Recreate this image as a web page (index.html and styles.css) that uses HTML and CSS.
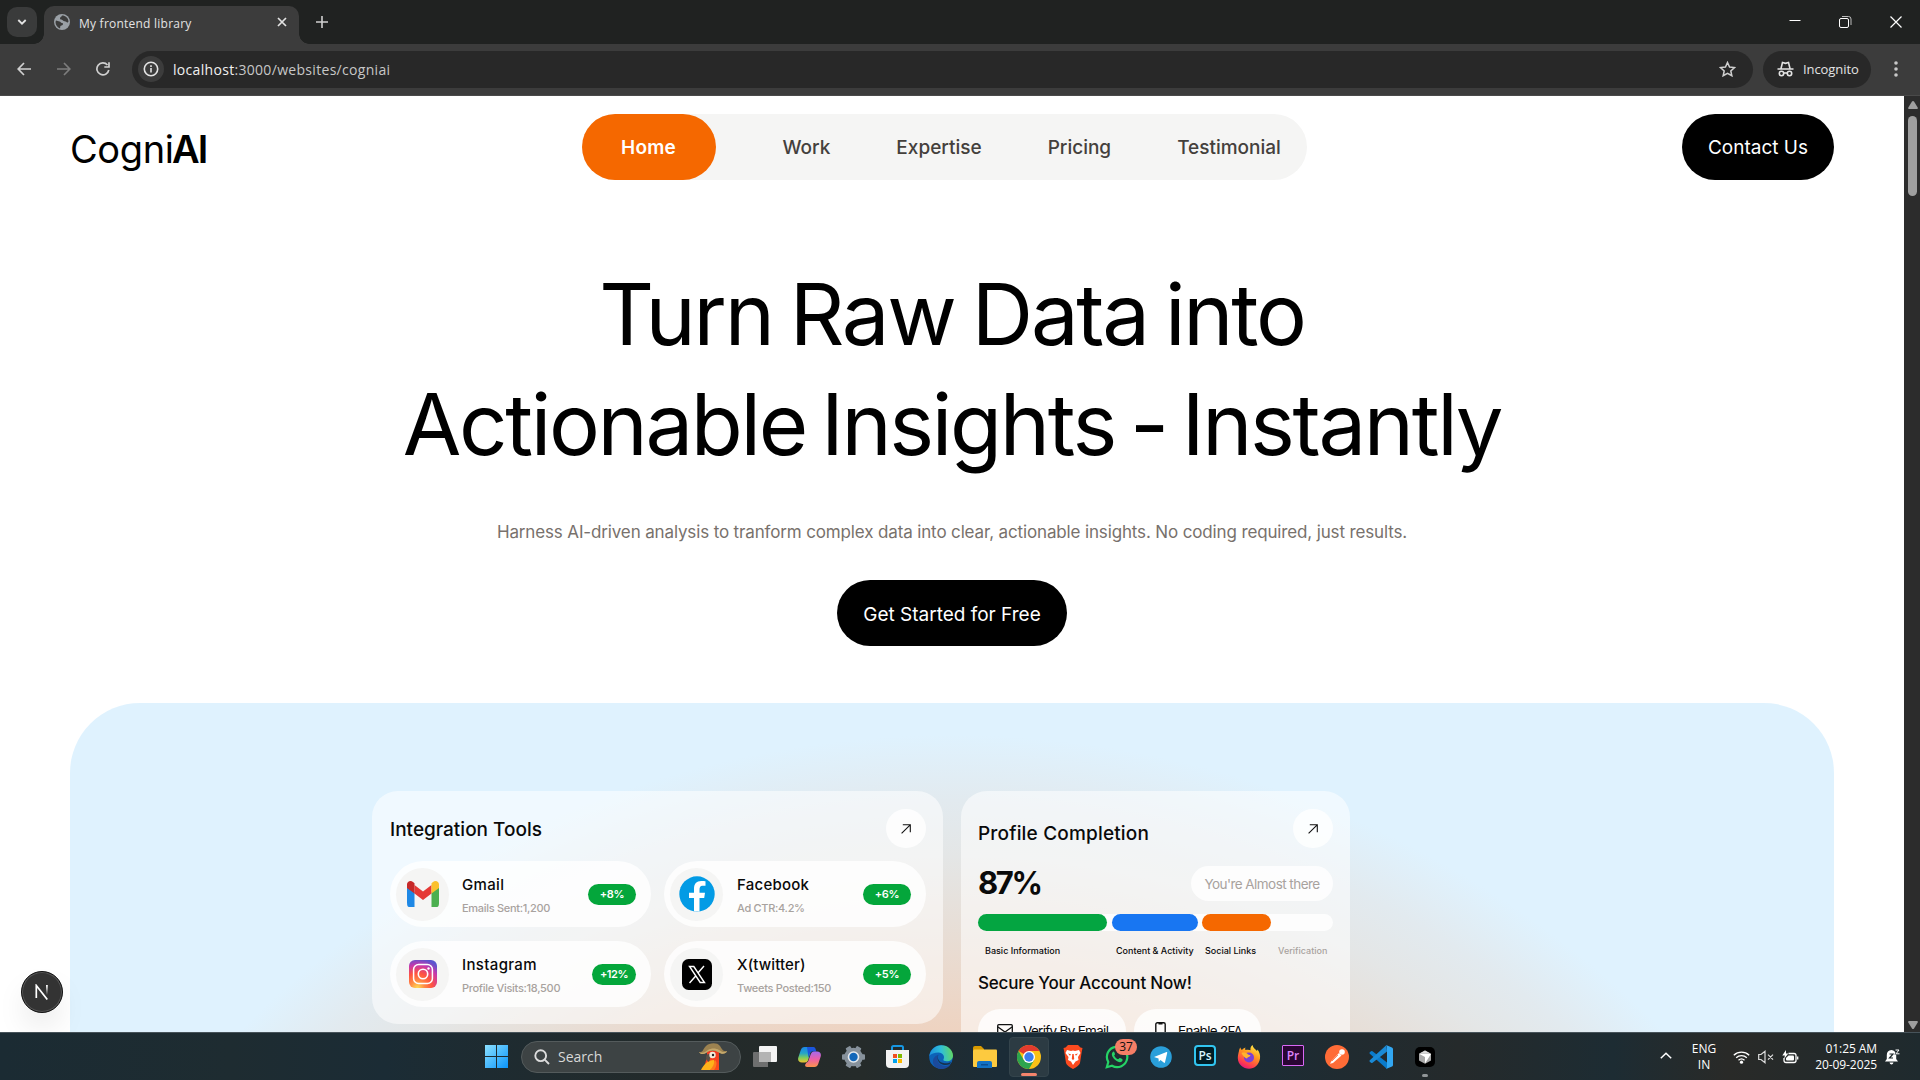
FILE: index.html
```html
<!DOCTYPE html>
<html lang="en">
<head>
<meta charset="utf-8">
<title>My frontend library</title>
<link rel="stylesheet" href="styles.css">
</head>
<body>
<div class="screen">
  <div class="tabs">
    <div class="tab-search"><svg width="10" height="8" viewBox="0 0 10 8" fill="none" stroke="#e3e3e3" stroke-width="1.8"><path d="M1.3 2 5 5.7 8.7 2"/></svg></div>
    <div class="tab">
      <svg width="16" height="16" viewBox="0 0 16 16"><circle cx="8" cy="8" r="8" fill="#9aa0a6"/><path d="M2 6.5c1.5.2 2.200 1 3.500 1s1 1.500 2.500 1.500 1.500 2-.5 2.500-1 2.500-1.500 3C3.500 13.500 1.500 11 1.500 8zM8 1.500c-.5 1.500-2 1.500-2 3s2.500 1 3 2 2.500.5 3.500 1.500 1.500.5 2-.5C14.300 4 11.500 1.500 8 1.500z" fill="#3c3c3c"/></svg>
      <span class="tab-title">My frontend library</span>
      <svg class="tab-close" width="10" height="10" viewBox="0 0 10 10" stroke="#e3e3e3" stroke-width="1.700"><path d="m1 1 8 8M9 1 1 9"/></svg>
    </div>
    <svg class="tab-new" width="12" height="12" viewBox="0 0 12 12" stroke="#d0d0d0" stroke-width="1.600"><path d="M6 0v12M0 6h12"/></svg>
    <div class="win">
      <svg width="12" height="12" viewBox="0 0 12 12" stroke="#fff"><path d="M.5 4.500h11"/></svg>
      <svg width="13" height="12" viewBox="0 0 13 12" fill="none" stroke="#fff"><rect x=".5" y="2.500" width="9" height="9" rx="1.500"/><path d="M3 .5h6.500a2.500 2.500 0 0 1 2.500 2.500V9" stroke="#bbb"/></svg>
      <svg width="12" height="12" viewBox="0 0 12 12" stroke="#fff" stroke-width="1.200"><path d="m.5.5 11 11M11.500.5l-11 11"/></svg>
    </div>
  </div>

  <div class="toolbar">
    <svg width="14" height="14" viewBox="0 0 14 14" fill="none" stroke="#d0d0d0" stroke-width="1.700"><path d="M14 7H1.500M7 1 1.200 7 7 13"/></svg>
    <svg width="14" height="14" viewBox="0 0 14 14" fill="none" stroke="#7d7d7d" stroke-width="1.700"><path d="M0 7h12.500M7 1l5.800 6L7 13"/></svg>
    <svg width="14" height="14" viewBox="0 0 14 14" fill="none" stroke="#d0d0d0" stroke-width="1.700"><path d="M12.800 8A6 6 0 1 1 11.500 3M13 .3V5H8.300"/></svg>
    <div class="address">
      <span class="info"><svg width="16" height="16" viewBox="0 0 16 16" fill="none" stroke="#e3e3e3" stroke-width="1.600"><circle cx="8" cy="8" r="6.700"/><path d="M8 7v4.500M8 4.300V6"/></svg></span>
      <span class="url"><b>localhost</b>:3000/websites/cogniai</span>
      <svg class="star" width="17" height="16" viewBox="0 0 17 16" fill="none" stroke="#d0d0d0" stroke-width="1.500"><path d="m8.500 1.500 2.050 4.550 4.950.5-3.700 3.350 1.050 4.850L8.500 12.300l-4.350 2.450L5.200 9.900 1.500 6.550l4.950-.5z"/></svg>
    </div>
    <div class="incognito">
      <svg width="17" height="16" viewBox="0 0 17 16" fill="none" stroke="#e3e3e3" stroke-width="1.600"><path d="M.5 8h16M4 7.500 5.500 1.500l3 .8 3-.8L13 7.500"/><circle cx="4.500" cy="12.500" r="2.200"/><circle cx="12.500" cy="12.500" r="2.200"/><path d="M6.700 12h3.600"/></svg>
      <span>Incognito</span>
    </div>
    <svg class="menu" width="4" height="16" viewBox="0 0 4 16" fill="#c8c8c8"><circle cx="2" cy="2" r="1.800"/><circle cx="2" cy="8" r="1.800"/><circle cx="2" cy="14" r="1.800"/></svg>
  </div>

  <div class="viewport">
    <main class="page">
      <header class="header">
        <div class="logo">Cogni<b>AI</b></div>
        <nav class="nav"><a class="active">Home</a><a>Work</a><a>Expertise</a><a>Pricing</a><a>Testimonial</a></nav>
        <a class="pill contact">Contact Us</a>
      </header>
      <section class="hero">
        <h1><span class="line-a">Turn Raw Data into</span><span class="line-b">Actionable Insights - Instantly</span></h1>
        <p>Harness AI-driven analysis to tranform complex data into clear, actionable insights. No coding required, just results.</p>
        <a class="pill cta">Get Started for Free</a>
      </section>
      <section class="panel">
        <article class="card tools">
          <div class="card-head"><h2>Integration Tools</h2><span class="go"><svg width="10" height="10" viewBox="0 0 10 10" fill="none" stroke="#111" stroke-width="1.100"><path d="M.6 9.400 9.200.8M1.800.7h7.500v7.500"/></svg></span></div>
          <div class="tool-grid">
            <div class="tool">
              <span class="tool-icon"><svg width="32" height="28" viewBox="0 -1 32 28"><path d="M0 6v15.500Q0 26 2 26h5.500V11z" fill="#1e88e5"/><path d="M32 6v15.500q0 4.500-2 4.500h-5.500V11z" fill="#4caf50"/><path d="m7.500 4 8.500 6.500L24.500 4v8.500L16 19l-8.500-6.500z" fill="#e53935"/><path d="M0 3.500C0 .5 3.500-1 6 1l1.500 1.200v10.300L0 7z" fill="#c62828"/><path d="M32 3.500C32 .5 28.500-1 26 1l-1.500 1.200v10.300L32 7z" fill="#fbc02d"/></svg></span>
              <div class="tool-text"><h3 class="sp3">Gmail</h3><p>Emails Sent:1,200</p></div><span class="badge">+8%</span>
            </div>
            <div class="tool">
              <span class="tool-icon"><svg width="36" height="36" viewBox="0 0 36 36"><circle cx="18" cy="18" r="17.700" fill="#039be5"/><path d="M20.500 35.500V22h4.700l.8-5.200h-5.500v-2.900c0-2.200.7-4.100 2.800-4.100h3.200V5.300c-.6-.1-1.900-.3-4.200-.3-4.900 0-7.300 2.700-7.300 8v3.800H10V22h5v13.300q2.500.5 5.500.2z" fill="#fff"/></svg></span>
              <div class="tool-text"><h3 class="sp2">Facebook</h3><p>Ad CTR:4.2%</p></div><span class="badge">+6%</span>
            </div>
            <div class="tool">
              <span class="tool-icon"><svg width="28" height="28" viewBox="0 0 28 28"><defs><radialGradient id="ig" cx=".3" cy="1" r="1.050"><stop offset="0" stop-color="#fd5"/><stop offset=".25" stop-color="#ff8a45"/><stop offset=".5" stop-color="#ff543f"/><stop offset=".78" stop-color="#c837ab"/><stop offset="1" stop-color="#5b54cf"/></radialGradient></defs><rect width="28" height="28" rx="6" fill="url(#ig)"/><rect x="4.600" y="4.600" width="18.800" height="18.800" rx="5" fill="none" stroke="#fff" stroke-width="1.500"/><circle cx="14" cy="14" r="4.700" fill="none" stroke="#fff" stroke-width="1.600"/><circle cx="19.500" cy="8.500" r="1.200" fill="#fff"/></svg></span>
              <div class="tool-text up"><h3 class="sp3">Instagram</h3><p>Profile Visits:18,500</p></div><span class="badge wide">+12%</span>
            </div>
            <div class="tool">
              <span class="tool-icon"><svg width="30" height="31" viewBox="0 0 30 31"><rect width="30" height="31" rx="6.500"/><path d="M7.500 7.500h4.300l10.700 16h-4.300zM22 7l-6.300 7.200M13.500 17.200 7.500 24" fill="none" stroke="#fff" stroke-width="1.400"/></svg></span>
              <div class="tool-text up"><h3 class="sp1">X(twitter)</h3><p>Tweets Posted:150</p></div><span class="badge">+5%</span>
            </div>
          </div>
        </article>
        <article class="card profile">
          <div class="card-head"><h2>Profile Completion</h2><span class="go"><svg width="10" height="10" viewBox="0 0 10 10" fill="none" stroke="#111" stroke-width="1.100"><path d="M.6 9.400 9.200.8M1.800.7h7.500v7.500"/></svg></span></div>
          <div class="score"><strong>87%</strong><span>You're Almost there</span></div>
          <div class="meter"><i class="m-green"></i><i class="m-blue"></i><i class="m-orange"></i></div>
          <div class="legend"><span>Basic Information</span><span>Content &amp; Activity</span><span>Social Links</span><span class="dim">Verification</span></div>
          <h4>Secure Your Account Now!</h4>
          <div class="actions">
            <a class="verify"><svg width="16" height="14" viewBox="0 0 16 14" fill="none" stroke="#111" stroke-width="1.300"><rect x=".7" y=".7" width="14.600" height="12" rx="1"/><path d="m1 3 7 5 7-5"/></svg>Verify By Email</a>
            <a class="twofa"><svg width="11" height="18" viewBox="0 0 11 18" fill="none" stroke="#111" stroke-width="1.400"><rect x=".8" y=".8" width="9.400" height="16.400" rx="1.500"/><path d="M3.500 1.500h4" stroke-width="2"/></svg>Enable 2FA</a>
          </div>
        </article>
      </section>
    </main>
    <div class="scrollbar">
      <svg width="10" height="8" viewBox="0 0 10 8" fill="#9f9f9f"><path d="M5 0q.6 0 1 .6L9.700 6.500Q10.200 8 9 8H1Q-.2 8 .3 6.500L4 .6Q4.400 0 5 0z"/></svg>
      <div class="thumb"></div>
      <svg class="down" width="10" height="8" viewBox="0 0 10 8" fill="#9f9f9f"><path d="M5 8q.6 0 1-.6l3.700-5.900Q10.200 0 9 0H1Q-.2 0 .3 1.500L4 7.400Q4.400 8 5 8z"/></svg>
    </div>
    <div class="dev-badge"><svg width="14" height="16" viewBox="0 0 14 16" fill="none"><defs><linearGradient id="nf" x1="0" y1="0" x2="0" y2="1"><stop stop-color="#fff"/><stop offset="1" stop-color="#fff" stop-opacity="0"/></linearGradient></defs><path d="M1.300 14V1.500L12.300 15.500" stroke="#fff" stroke-width="1.700"/><rect x="11" y="1" width="1.800" height="10" fill="url(#nf)"/></svg></div>
  </div>

  <footer class="taskbar">
    <svg class="start" width="23" height="23" viewBox="0 0 23 23"><defs><linearGradient id="wn" x1="0" y1="0" x2="1" y2="1"><stop stop-color="#8be0ff"/><stop offset="1" stop-color="#0a94fb"/></linearGradient></defs><path d="M0 0h11v11H0zM12 0h11v11H12zM0 12h11v11H0zM12 12h11v11H12z" fill="url(#wn)"/></svg>
    <div class="search">
      <svg width="16" height="16" viewBox="0 0 16 16" fill="none" stroke="#dcdcdc" stroke-width="1.900"><circle cx="6.700" cy="6.700" r="5.400"/><path d="m10.700 10.700 4.300 4.300"/></svg>
      <span>Search</span>
      <svg class="parrot" width="28" height="27" viewBox="0 0 28 27"><defs><linearGradient id="pr" x1="0" y1="0" x2="0" y2="1"><stop stop-color="#ef3b24"/><stop offset="1" stop-color="#ff4a1c"/></linearGradient></defs><path d="M8 8h12v19H7c-2-6 0-9 1-12z" fill="url(#pr)"/><path d="M2 27c3-6 7-10 13-10 2 4-1 9-4 10z" fill="#ffb21a"/><path d="M16 17c3 2 1 8-1 10h-4c3-3 4-6 5-10z" fill="#ff7a1c"/><path d="M10 11c-4 0-4 6 0 8 1-2 1-5 2-7z" fill="#5a5146"/><circle cx="13.500" cy="12" r="3.200" fill="#f3ecdc"/><circle cx="14" cy="12" r="1.200" fill="#222"/><path d="M0 9c4 1 4-3 7-6s11-4 14 0c2 3 3 6 7 5-1 3-5 4-9 1-4-2-8-2-12 1-3 2-6 1-7-1z" fill="#9c8250"/><path d="M0 9c4 2 6 0 9-2s8-2 11 0 5 3 8 1c-1 3-5 4-9 1-4-2-8-2-12 1-3 2-6 1-7-1z" fill="#c5a96c"/></svg>
    </div>
    <div class="apps">
      <span><svg width="24" height="22" viewBox="0 0 24 22"><rect x="6" width="18" height="16" rx="1" fill="#f4f4f4"/><path d="M1 6h17v10h-3v5H1q-1 0-1-1V7q0-1 1-1z" fill="#7b7b7b" fill-opacity=".85"/><path d="M6 6h12v10H6z" fill="#b4b4b4"/></svg></span>
      <span><svg width="23" height="22" viewBox="0 0 23 22"><defs><linearGradient id="c1" x1="0" y1="0" x2="0" y2="1"><stop stop-color="#1b86e8"/><stop offset=".4" stop-color="#25a5c8"/><stop offset=".7" stop-color="#7fce5a"/><stop offset="1" stop-color="#f4c12d"/></linearGradient><linearGradient id="c2" x1="0" y1="0" x2="0" y2="1"><stop stop-color="#a469ee"/><stop offset=".5" stop-color="#ec5fa6"/><stop offset="1" stop-color="#fb934b"/></linearGradient></defs><path d="M6.500 1H14l-4 13.500q-.8 2-3 2H4c-3 0-4.500-2-3.700-5L2.800 4Q3.800 1 6.500 1z" fill="url(#c1)"/><path d="M9 1h6c2 0 2.500 1 3.300 4.500H14q-1.500 0-2 1.500L10.500 12z" fill="#1b55dc"/><path d="M16.500 21H9q-2 0-2-2l1.500-2.500q1.500 0 2-2L12.800 8q.7-2.500 3-2.500H19c3 0 4.500 2 3.700 5L20.200 18q-1 3-3.700 3z" fill="url(#c2)"/></svg></span>
      <span><svg width="25" height="24" viewBox="-12 -12 24 24"><g fill="#87929c"><circle r="9.300"/><rect x="-2.700" y="-11.500" width="5.400" height="23" rx="1" transform="rotate(30)"/><rect x="-2.700" y="-11.500" width="5.400" height="23" rx="1" transform="rotate(90)"/><rect x="-2.700" y="-11.500" width="5.400" height="23" rx="1" transform="rotate(150)"/></g><circle r="5.800" fill="#e6eaee"/><circle r="4.200" fill="#1267b9"/></svg></span>
      <span><svg width="23" height="23" viewBox="0 0 23 23"><path d="M6 6V2.500Q6 1 7.500 1h8Q17 1 17 2.500V6" fill="none" stroke="#1797e3" stroke-width="2"/><path d="M0 5h23v14q0 4-4 4H4q-4 0-4-4z" fill="#f3f3f3"/><path d="M7 9h4v4H7z" fill="#f25022"/><path d="M12 9h4v4h-4z" fill="#7fba00"/><path d="M7 14h4v4H7z" fill="#00a4ef"/><path d="M12 14h4v4h-4z" fill="#ffb900"/></svg></span>
      <span><svg width="24" height="24" viewBox="0 0 24 24"><defs><linearGradient id="e1" x1="0" y1=".5" x2="1" y2=".4"><stop stop-color="#1c8fdd"/><stop offset=".5" stop-color="#2fbfd9"/><stop offset="1" stop-color="#63d860"/></linearGradient></defs><circle cx="12" cy="12" r="11.800" fill="#0d63b8"/><path d="M.3 11C1.500 4.500 6.500.2 12.300.2 19 .2 24 5.200 24 10.500c0 4-3 5.800-6.200 5.800-2.500 0-4-.8-3.300-2 1.700-2.600-.5-6.800-5-6.800C5.500 7.500 1.800 9 .3 11z" fill="url(#e1)"/><path d="M8.500 13c-.7 5 4 8.500 9.500 7.800 1.500-.2 3-.8 3.800-1.500C17 26 8 25 5 20.500 2.500 16.500 4.500 11 9.500 9.800 8.800 10.500 8.500 12 8.500 13z" fill="#1b4a9c"/><path d="M9.500 9.800c-2 3 .500 8 6 8.500 2.500.2 4.500-.3 6.500-1.300l-1 2c-4 2.300-11 1-12.300-4.500-.4-2 0-3.700.8-4.700z" fill="#17324f"/></svg></span>
      <span><svg width="24" height="22" viewBox="0 0 24 22"><path d="M0 2q0-2 2-2h6l3 3v4H0z" fill="#d99a00"/><path d="M1 3.500h22q1 0 1 1V20q0 1-1 1H1q-1 0-1-1V4.500z" fill="#fdca3f"/><path d="M4 22v-5q0-2 2-2h11q2 0 2 2v5z" fill="#1272c4"/><path d="M8 18h7v1.500H8z" fill="#0a4f94"/></svg></span>
      <span class="on"><svg width="24" height="24" viewBox="0 0 24 24"><circle cx="12" cy="12" r="12" fill="#fbc116"/><path d="M12 12 1.600 6A12 12 0 0 1 22.400 6H12z" fill="#e33b2e"/><path d="M1.600 6A12 12 0 0 0 12 24l5.200-9L12 12 6.800 15z" fill="#2da44e"/><circle cx="12" cy="12" r="6" fill="#fff"/><circle cx="12" cy="12" r="4.700" fill="#3b7ded"/></svg></span>
      <span><svg width="20" height="24" viewBox="0 0 20 24"><path d="m5 0h10l2.500 2.500 2 .5-.8 4L17 18q-1 3-7 6-6-3-7-6L1.300 7 .5 3l2-.5z" fill="#fb4a1f"/><path d="m4 5 4 1 2-.5 2 .5 4-1 1.500 3-2.500 4 .5 3-3 1.500L10 20l-2-3.500L5 15l.5-3L2.500 8z" fill="#fff"/><path d="m5 8.500 3 .8-1 1.500zM15 8.500l-3 .8 1 1.500zM9.300 9h1.400l.5 5-1.200 1-1.200-1z" fill="#fb4a1f"/></svg></span>
      <span><svg width="24" height="24" viewBox="0 0 24 24"><path d="M1.800 22.200 3.300 17A10.200 10.200 0 1 1 7 20.700z" fill="#1f2c31" stroke="#25d366" stroke-width="2.200"/><path d="M8.500 6.500c-3 2-1.500 5.500 1.500 8.300s6.500 3.500 7.500.8c.5-1.300-.5-1.600-2.500-2.500-1-.4-1.200 1.200-2 1.200-1.500-.5-3-2-3.800-3.500-.2-.6 1-.9.8-1.800-.5-1.500-.8-2.700-1.500-2.500z" fill="#25d366"/></svg><b class="count">37</b></span>
      <span><svg width="22" height="22" viewBox="0 0 22 22"><circle cx="11" cy="11" r="10.800" fill="#2a9fda"/><path d="m4 11 12.500-5q1-.2.7 1L15 16.300q-.3 1-1.300.3L10.500 14l-1.700 1.700L8.500 12.600z" fill="#fff"/></svg></span>
      <span><i class="adobe ps">Ps</i></span>
      <span><svg width="24" height="24" viewBox="0 0 24 24"><defs><linearGradient id="ff" x1=".8" y1="0" x2=".3" y2="1"><stop stop-color="#fff04a"/><stop offset=".4" stop-color="#ff9a1f"/><stop offset=".8" stop-color="#ff3b4e"/><stop offset="1" stop-color="#e3167f"/></linearGradient></defs><path d="M2 6c0-1.500.8-3 1.500-3.500.2 1.500.8 2 1.500 2.500C6 3.500 7 3 8.500 2.500c-.5 1-.5 2 0 2.500 2-.5 3.500-.5 5 .3C13 3 14 1 15.500 0c.5 3 3 4 4.500 6l.5-1.500C22.500 7 23.500 10 23 13.500 22 20 17.500 23.800 12 23.800S.8 19.500.8 13C.8 10 1.500 8 2 6z" fill="url(#ff)"/><circle cx="12" cy="12.500" r="5" fill="#7a3fd6"/><path d="M4.500 8c2-.8 5-.5 6.500 1.500 1 .5 2 .2 2.500 1-1 1.500-3 1.500-3.500 3-1.500-.2-4.500-2.500-5.500-5.500z" fill="#ffb52e"/></svg></span>
      <span><i class="adobe prm">Pr</i></span>
      <span><svg width="24" height="24" viewBox="0 0 24 24"><circle cx="12" cy="12" r="12" fill="#ff6c37"/><path d="m14 8 2.500 2.500L8 18l-3 .8L6.500 16z" fill="#fff"/><circle cx="17" cy="7" r="2.800" fill="#fff"/><path d="m13 10-6 6" stroke="#ff6c37" stroke-width=".8"/></svg></span>
      <span><svg width="24" height="24" viewBox="0 0 24 24"><path d="M18 0v24L.8 8.800Q0 8 .8 7.200L2 6.200q.8-.6 1.500 0L18 17.500z" fill="#0a7bcb"/><path d="M18 6.500 3.500 17.800q-.7.600-1.500 0L.8 16.800Q0 16 .8 15.200L17.500 0z" fill="#1a8ad6"/><path d="m17 0 6 2.500q1 .5 1 1.500v16q0 1-1 1.500L17 24q1-.4 1-2V2q0-1.500-1-2z" fill="#32a7f2"/></svg></span>
      <span class="idle"><svg width="20" height="20" viewBox="0 0 20 20"><rect width="20" height="20" rx="5"/><path d="m10 3.500 6 3.300v6.700L10 16.800l-6-3.300V6.800z" fill="#a9a9a9"/><path d="m4 6.800 6-3.300 6 3.300z" fill="#d8d8d8"/><path d="M4.500 7H16l-6 9.500V10z" fill="#fff"/></svg></span>
    </div>
    <div class="tray">
      <svg class="chev" width="12" height="7" viewBox="0 0 12 7" fill="none" stroke="#fff" stroke-width="1.500"><path d="m.8 6.200 5.200-5 5.200 5"/></svg>
      <div class="lang">ENG<br>IN</div>
      <svg width="17" height="14" viewBox="0 0 17 14" fill="none" stroke="#fff" stroke-width="1.300"><path d="M.8 5.200a11 11 0 0 1 15.400 0M3.200 7.800a7.600 7.600 0 0 1 10.600 0M5.500 10.300a4.400 4.400 0 0 1 6 0"/><circle cx="8.500" cy="12.200" r="1.600" fill="#fff" stroke="none"/></svg>
      <svg width="16" height="14" viewBox="0 0 16 14" fill="none" stroke="#ddd" stroke-width="1.200"><path d="M.7 4.500v5H3l4 3.200V1.300L3 4.500zM10 4.700l5 5M15 4.700l-5 5"/></svg>
      <svg width="17" height="14" viewBox="0 0 17 14" fill="none" stroke="#fff" stroke-width="1.300"><path d="M6.500 3.500H12Q14 3.500 14 5.500v5q0 2-2 2H4q-2 0-2-2V8"/><path d="M6.500 5.500H11q1 0 1 1v3q0 1-1 1H5q-1 0-1-1V8z" fill="#fff" stroke="none"/><path d="M4 0 .3 5.500H3L2 9l4.300-5.500H4z" fill="#fff" stroke="none"/><path d="M15.700 6.500v3"/></svg>
      <div class="clock"><span>01:25 AM</span><span class="date">20-09-2025</span></div>
      <svg width="15" height="16" viewBox="0 0 15 16"><path d="M6.500 1Q1.800 1.500 1.800 6v4L0 12.500h13L11.200 10V6Q10.500 1.500 6.500 1zM4.500 13.500h4q-.5 2-2 2t-2-2z" fill="#fff"/><path d="M4.500 5h3.500l-3.500 4H8M10 1h3.500L10.500 5h3.500" fill="none" stroke="#1f292c" stroke-width="1.200"/><path d="M10.500 1H14L11 4.800h3.500" fill="none" stroke="#fff"/></svg>
    </div>
  </footer>
</div>
</body>
</html>
```
FILE: styles.css
```css
* { box-sizing: border-box; margin: 0; padding: 0; }
body { width: 1920px; height: 1080px; overflow: hidden; background: #fff; font-family: Inter, "Liberation Sans", sans-serif; white-space: nowrap; }
svg { display: block; flex: none; }
h1, h2, h3, h4 { font-weight: 500; }
.screen { display: flex; flex-direction: column; height: 1080px; }

/* browser chrome */
.tabs { display: flex; height: 44px; padding-left: 7px; background: #202221; font-family: "Open Sans", sans-serif; }
.tab-search { display: grid; place-items: center; width: 30px; height: 30px; margin-top: 7px; border-radius: 10px; background: #3a3b3b; }
.tab { position: relative; display: flex; align-items: center; width: 255px; height: 38px; margin: 6px 0 0 7px; padding: 0 12px 6px 10px; border-radius: 10px 10px 0 0; background: #3c3c3c; }
.tab::before, .tab::after { content: ""; position: absolute; bottom: 0; width: 10px; height: 10px; }
.tab::before { left: -10px; background: radial-gradient(circle at 0 0, transparent 9.5px, #3c3c3c 10px); }
.tab::after { right: -10px; background: radial-gradient(circle at 100% 0, transparent 9.5px, #3c3c3c 10px); }
.tab-title { margin: 2px auto 0 9px; color: #e3e3e3; font-size: 12px; letter-spacing: .23px; }
.tab-new { margin: 16px 0 0 17px; }
.win { display: flex; gap: 38px; margin: 16px 18px 0 auto; }
.toolbar { display: flex; align-items: center; height: 52px; padding: 0 22px 1px 17px; border-bottom: 1px solid #4a4a4a; background: #3c3c3c; font-family: "Open Sans", sans-serif; }
.toolbar > svg + svg { margin-left: 25.5px; }
.address { display: flex; align-items: center; width: 1621px; height: 37px; margin-left: 22px; padding: 0 17px 0 6px; border-radius: 19px; background: #282828; }
.info { display: grid; place-items: center; width: 26px; height: 26px; border-radius: 50%; background: #3c3c3c; }
.url { margin-left: 9px; color: #c7c7c7; font-size: 14px; letter-spacing: .31px; }
.url b { color: #f0f0f0; font-weight: 400; }
.star { margin-left: auto; }
.incognito { display: flex; align-items: center; gap: 9px; width: 108px; height: 37px; margin-left: 10px; padding-left: 14px; border-radius: 19px; background: #282828; color: #e3e3e3; font-size: 13px; letter-spacing: -.07px; }
.menu { margin-left: auto; }

/* page */
.viewport { position: relative; display: flex; height: 936px; }
.page { display: flex; flex-direction: column; width: 1904px; height: 936px; overflow: hidden; background: #fff; }
.header { display: flex; flex: none; align-items: center; justify-content: space-between; height: 84px; padding: 18px 70px 0; }
.logo { width: 136px; padding-top: 4px; font-size: 38px; line-height: 46px; letter-spacing: -.4px; color: #000; }
.logo b { font-weight: 600; letter-spacing: -2px; margin-left: -1.5px; }
.nav { display: flex; align-items: center; gap: 65.5px; width: 725px; height: 66px; border-radius: 33px; background: #f5f5f4; color: #44403c; font-size: 19px; font-weight: 500; }
.nav .active { display: grid; place-items: center; width: 134px; height: 66px; margin-right: 1.5px; border-radius: 33px; background: #f56800; color: #fff; font-weight: 600; letter-spacing: .2px; }
.nav a + a + a { margin-left: .5px; }
.pill { display: grid; place-items: center; height: 66px; border-radius: 33px; background: #000; color: #fff; font-size: 19px; }
.contact { width: 152px; }
.hero { display: flex; flex: none; flex-direction: column; align-items: center; padding-top: 80px; }
.hero h1 { display: flex; flex-direction: column; align-items: center; color: #000; font-size: 85px; font-weight: 400; line-height: 110px; }
.line-a { letter-spacing: -2.25px; word-spacing: -4.500px; }
.line-b { letter-spacing: -2.35px; word-spacing: -6.500px; }
.hero p { margin-top: 39px; color: #78716c; font-size: 17px; line-height: 26px; letter-spacing: -.14px; }
.cta { width: 230px; margin-top: 35px; padding-top: 3px; }
.panel { display: flex; flex: none; align-items: flex-start; gap: 18px; width: 1764px; height: 1000px; margin: 57px 70px 0; padding: 88px 0 0 302px; border-radius: 70px; background: radial-gradient(circle 1006px at 882px 1038px, #f0b890 0, #eed3c1 711px, #e7dfd8 820px, #e4e6e6 885px, #e2eaef 940px, #dff2fe 1006px); }
.card { border-radius: 26px; background: rgba(255, 255, 255, .54); color: #0a0a0a; }
.tools { width: 571px; height: 233px; padding: 18px 17px 0 18px; }
.card-head { display: flex; align-items: center; justify-content: space-between; height: 39px; }
.card-head h2 { padding-top: 2px; font-size: 19px; line-height: 24px; }
.go { display: grid; place-items: center; width: 40px; height: 39px; border-radius: 20px; background: rgba(255, 255, 255, .8); }
.tool-grid { display: grid; grid-template-columns: 261px 262px; gap: 14px 13px; margin-top: 13px; }
.tool { display: flex; align-items: center; height: 66px; padding: 0 15px 0 6px; border-radius: 33px; background: rgba(255, 255, 255, .8); }
.tool-icon { display: grid; place-items: center; width: 53px; height: 53px; border-radius: 50%; background: #f5f5f4; }
.tool-text { margin: 3px auto 0 13px; }
.tool:nth-child(even) .tool-text { margin-left: 14px; }
.tool-text.up { margin-top: 2px; }
.tool-text h3 { font-size: 15px; line-height: 22px; }
.tool-text p { margin-top: 3px; color: #a8a29e; font-size: 11px; font-weight: 500; line-height: 18px; letter-spacing: -.3px; }
.sp1 { letter-spacing: .12px; }
.sp2 { letter-spacing: .23px; }
.sp3 { letter-spacing: .35px; }
.badge { display: grid; place-items: center; width: 48px; height: 21px; border-radius: 11px; background: #04a63b; color: #fff; font-size: 11px; font-weight: 600; letter-spacing: -.25px; }
.badge.wide { width: 44px; letter-spacing: -.45px; }
.profile { width: 389px; height: 400px; padding: 18px 17px 0; }
.profile h2 { padding-top: 11px; letter-spacing: .18px; }
.score { display: flex; align-items: center; justify-content: space-between; height: 35px; margin-top: 18px; }
.score strong { padding-bottom: 2px; font-size: 31px; font-weight: 700; letter-spacing: -2.4px; }
.score span { display: grid; place-items: center; width: 142px; height: 35px; border-radius: 18px; background: rgba(255, 255, 255, .8); color: #a8a29e; font-size: 13.500px; letter-spacing: -.55px; }
.meter { display: flex; height: 17px; margin-top: 13px; border-radius: 9px; background: rgba(255, 255, 255, .8); }
.meter i { border-radius: 9px; }
.m-green { width: 129px; background: #04a541; }
.m-blue { width: 86px; margin-left: 5px; background: #1876f2; }
.m-orange { width: 69px; margin-left: 4px; background: #f56800; }
.legend { display: grid; grid-template-columns: 131px 89px 73px auto; margin-top: 13px; padding-left: 7px; font-size: 9px; font-weight: 500; line-height: 14px; }
.legend .dim { color: #a8a29e; }
.profile h4 { margin-top: 14px; font-size: 17px; line-height: 22px; letter-spacing: -.2px; }
.actions { display: flex; gap: 8px; margin-top: 15px; }
.actions a { display: flex; align-items: center; height: 44px; border-radius: 22px; background: rgba(255, 255, 255, .8); font-size: 13.500px; letter-spacing: -.7px; }
.verify { gap: 10px; width: 148px; padding-left: 19px; }
.twofa { gap: 12px; width: 127px; padding-left: 21px; }

.scrollbar { display: flex; flex-direction: column; align-items: center; width: 16px; padding: 5px 0 3px 1px; background: #2c2c2c; }
.thumb { width: 9px; height: 80px; margin-top: 7px; border-radius: 5px; background: #9f9f9f; }
.down { margin-top: auto; }
.dev-badge { position: absolute; left: 21px; top: 875px; display: grid; place-items: center; width: 42px; height: 42px; border: 1px solid #111; border-radius: 50%; background: #333; box-shadow: inset 0 0 0 1px #555, 0 16px 32px -8px rgba(0, 0, 0, .18); }

/* desktop taskbar */
.taskbar { position: relative; z-index: 1; display: flex; align-items: center; height: 48px; padding-left: 485px; border-top: 1px solid #47535a; background: linear-gradient(90deg, #1b2b33 0, #1e2c31 12%, #1b2c35 20%, #232a2a 35%, #252b2a 45%, #1b2c37 52%, #1c2c35 65%, #252a2b 76%, #1d2c33 84%, #292a28 90%, #1f2a2e 100%); color: #fff; font-family: "Open Sans", sans-serif; }
.search { display: flex; align-items: center; width: 220px; height: 32px; margin-left: 13px; padding: 0 13px 0 12px; border: 1px solid #545b5c; border-radius: 16px; background: #3d4344; }
.search span { margin-left: 8px; color: #d8d8d8; font-size: 14px; }
.parrot { margin-left: auto; }
.apps { display: flex; margin-left: 2px; }
.apps > span { position: relative; display: grid; place-items: center; width: 44px; height: 40px; }
.apps .on { width: 40px; margin: 0 2px; border: 1px solid #34444c; border-radius: 4px; background: #2c3b43; }
.on::after, .idle::after { content: ""; position: absolute; bottom: 0; width: 16px; height: 3px; border-radius: 2px; background: #f4846c; }
.idle::after { width: 6px; background: #909597; }
.count { position: absolute; left: 20px; top: 2px; width: 22px; border-radius: 8px; background: #f57e66; color: #111; font-size: 12px; font-weight: 400; line-height: 16px; text-align: center; }
.adobe { display: grid; place-items: center; width: 22px; height: 21px; margin-bottom: 2px; border: 2px solid #31c5f0; border-radius: 4px; background: #001d26; color: #d9f6ff; font-size: 12px; font-style: normal; font-weight: 600; line-height: 16px; }
.adobe.prm { border-width: 1px; border-color: #d968f5; border-radius: 1px; background: #2a0634; color: #dd84fb; }
.tray { display: flex; align-items: center; margin: 0 20px 0 auto; font-size: 12px; }
.chev { margin-bottom: 2px; }
.lang { width: 30px; margin: 0 14px 0 17px; line-height: 16px; text-align: center; }
.tray > svg + svg { margin-left: 8px; }
.clock { display: flex; flex-direction: column; align-items: flex-end; width: 68px; margin: 0 8px 0 10px; line-height: 16px; letter-spacing: -.08px; }
```
